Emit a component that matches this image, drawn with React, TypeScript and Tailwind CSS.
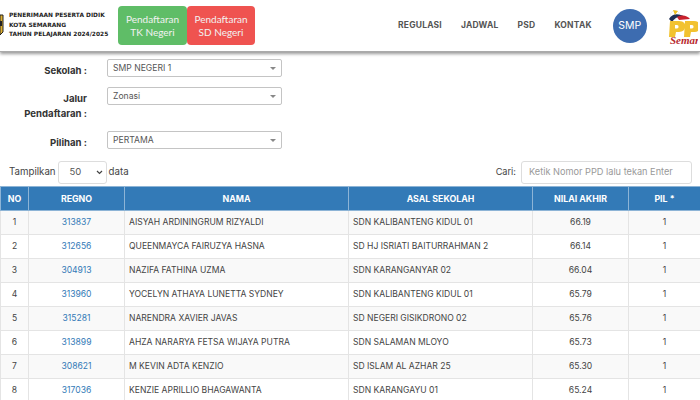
import React from "react";

const rows = [
  ["1", "313837", "AISYAH ARDININGRUM RIZYALDI", "SDN KALIBANTENG KIDUL 01", "66.19", "1"],
  ["2", "312656", "QUEENMAYCA FAIRUZYA HASNA", "SD HJ ISRIATI BAITURRAHMAN 2", "66.14", "1"],
  ["3", "304913", "NAZIFA FATHINA UZMA", "SDN KARANGANYAR 02", "66.04", "1"],
  ["4", "313960", "YOCELYN ATHAYA LUNETTA SYDNEY", "SDN KALIBANTENG KIDUL 01", "65.79", "1"],
  ["5", "315281", "NARENDRA XAVIER JAVAS", "SD NEGERI GISIKDRONO 02", "65.76", "1"],
  ["6", "313899", "AHZA NARARYA FETSA WIJAYA PUTRA", "SDN SALAMAN MLOYO", "65.73", "1"],
  ["7", "308621", "M KEVIN ADTA KENZIO", "SD ISLAM AL AZHAR 25", "65.30", "1"],
  ["8", "317036", "KENZIE APRILLIO BHAGAWANTA", "SDN KARANGAYU 01", "65.24", "1"],
];

function SelectBox({ value }: { value: string }) {
  return (
    <div className="flex h-[18px] w-[175px] items-center justify-between rounded-[2px] border border-[#c4c4c4] bg-white pl-[5px] pr-[5px] text-[8.6px] text-[#555]">
      <span className="pt-[1px]">{value}</span>
      <span className="h-0 w-0 border-x-[3px] border-t-[3px] border-x-transparent border-t-[#888]" />
    </div>
  );
}

function FormRow({ label, value, className }: { label: React.ReactNode; value: string; className: string }) {
  return (
    <div className={`flex items-start ${className}`}>
      <div className="w-[87px] pt-[4px] text-right text-[9.6px] font-bold leading-[15px] text-[#333]">{label}</div>
      <div className="ml-[20px]">
        <SelectBox value={value} />
      </div>
    </div>
  );
}

export default function App() {
  return (
    <div className="h-[400px] w-[700px] overflow-hidden bg-white font-['Inter','Liberation_Sans',sans-serif] text-[#333]">
      <header className="flex h-[52px] items-center border-b border-[#aaa] bg-white shadow-[0_2px_3px_rgba(0,0,0,0.4)]">
        <svg width="4" height="24" viewBox="0 0 4 24" className="mt-[-2px] shrink-0">
          <path d="M0 2 H3 V19 L0 22 Z" fill="#e0b030" stroke="#222" strokeWidth="1" />
          <rect x="0" y="8" width="2" height="5" fill="#222" />
        </svg>
        <div className="ml-[5px] w-[109px] shrink-0 font-['DejaVu_Sans',sans-serif] text-[5.9px] font-bold leading-[9.8px] text-[#222]">
          <div className="whitespace-nowrap">PENERIMAAN PESERTA DIDIK</div>
          <div className="whitespace-nowrap">KOTA SEMARANG</div>
          <div className="whitespace-nowrap">TAHUN PELAJARAN 2024/2025</div>
        </div>
        <div className="flex shrink-0 text-center font-['Lato',sans-serif] text-[10px] leading-[13px] text-[#f2f2f2]">
          <div className="flex h-[39px] w-[69px] flex-col justify-center rounded-[4px] bg-[#5fbd67]">
            <span>Pendaftaran</span>
            <span>TK Negeri</span>
          </div>
          <div className="flex h-[39px] w-[68px] flex-col justify-center rounded-[4px] bg-[#ef5350]">
            <span>Pendaftaran</span>
            <span>SD Negeri</span>
          </div>
        </div>
        <nav className="ml-[143px] flex shrink-0 gap-[19px] text-[8.5px] font-bold tracking-[0.2px] text-[#555]">
          <span>REGULASI</span>
          <span>JADWAL</span>
          <span>PSD</span>
          <span>KONTAK</span>
        </nav>
        <div className="ml-[21px] flex h-[34px] w-[34px] shrink-0 items-center justify-center rounded-full bg-[#3d6cb0] text-[10.5px] text-white">
          SMP
        </div>
        <svg width="32" height="40" viewBox="0 0 32 40" className="ml-[19px] shrink-0">
          <circle cx="9" cy="9" r="4.5" fill="#fff" stroke="#ddd" strokeWidth="0.5" />
          <path d="M3 13 C6 7 13 7 19 11 C13 10 9 11 6 16 Z" fill="#1f2f55" />
          <path d="M7 4 L12 5 L9 9 Z" fill="#f0c020" />
          <path d="M11 11 C17 8 21 10 24 13 L13 14 Z" fill="#c8202c" />
          <path d="M4 15 H13 C18 15 20 18 19 22 C18 26 14 26 10 26 L9 31 H3 Z M9 19 V22.5 H11 C13 22.5 13 19 11 19 Z" fill="#f2c230" fillRule="evenodd" />
          <path d="M19 15 H28 C33 15 35 18 34 22 C33 26 29 26 25 26 L24 31 H18 Z M24 19 V22.5 H26 C28 22.5 28 19 26 19 Z" fill="#f2c230" fillRule="evenodd" />
          <text x="4" y="38" fontFamily="'Liberation Serif', serif" fontStyle="italic" fontSize="11" fontWeight="700" fill="#b82a30">
            Semar
          </text>
        </svg>
      </header>

      <div className="pt-[7px]">
        <FormRow label="Sekolah :" value="SMP NEGERI 1" className="h-[28px]" />
        <FormRow
          label={
            <>
              <div>Jalur</div>
              <div>Pendaftaran :</div>
            </>
          }
          value="Zonasi"
          className="h-[44px]"
        />
        <FormRow label="Pilihan :" value="PERTAMA" className="h-[29px]" />
      </div>

      <div className="flex h-[24px] items-center justify-between pl-[9px] pr-[8px] text-[9.7px] text-[#444]">
        <div className="flex items-center">
          <span>Tampilkan</span>
          <div className="ml-[2px] flex h-[23px] w-[49px] items-center justify-between rounded-[3px] border border-[#ddd] pl-[11px] pr-[3px] text-[9.5px] text-[#555]">
            <span>50</span>
            <svg width="7" height="5" viewBox="0 0 7 5">
              <path d="M1 1 L3.5 3.5 L6 1" fill="none" stroke="#444" strokeWidth="1.2" />
            </svg>
          </div>
          <span className="ml-[2px]">data</span>
        </div>
        <div className="flex items-center">
          <span className="text-[9.2px]">Cari:</span>
          <div className="ml-[5px] flex h-[23px] w-[171px] items-center rounded-[3px] border border-[#ddd] pl-[7px] text-[9.2px] text-[#999]">
            Ketik Nomor PPD lalu tekan Enter
          </div>
        </div>
      </div>

      <table className="mt-[2px] w-[700px] table-fixed border-collapse text-[8.55px] text-[#444]">
        <colgroup>
          <col className="w-[28px]" />
          <col className="w-[96px]" />
          <col className="w-[224px]" />
          <col className="w-[184px]" />
          <col className="w-[96px]" />
          <col className="w-[72px]" />
        </colgroup>
        <thead>
          <tr className="h-[24px] bg-[#337ab7] text-[8.8px] font-bold text-white">
            {["NO", "REGNO", "NAMA", "ASAL SEKOLAH", "NILAI AKHIR", "PIL *"].map((h) => (
              <th key={h} className="border border-[#8db4d6] p-0 text-center font-bold">
                {h}
              </th>
            ))}
          </tr>
        </thead>
        <tbody>
          {rows.map((r, i) => (
            <tr key={r[0]} className={`h-[24px] ${i % 2 === 0 ? "bg-[#f9f9f9]" : "bg-white"}`}>
              <td className="border border-[#e4e4e4] p-0 text-center">{r[0]}</td>
              <td className="border border-[#e4e4e4] p-0 text-center text-[#337ab7]">{r[1]}</td>
              <td className="truncate border border-[#e4e4e4] py-0 pl-[4px] pr-0">{r[2]}</td>
              <td className="truncate border border-[#e4e4e4] py-0 pl-[4px] pr-0">{r[3]}</td>
              <td className="border border-[#e4e4e4] p-0 text-center">{r[4]}</td>
              <td className="border border-[#e4e4e4] p-0 text-center">{r[5]}</td>
            </tr>
          ))}
        </tbody>
      </table>
    </div>
  );
}
